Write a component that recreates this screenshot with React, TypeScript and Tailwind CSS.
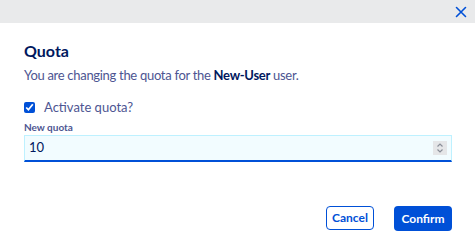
import { useState } from 'react'

export default function App() {
  const [active, setActive] = useState(true)
  const [quota, setQuota] = useState('10')

  return (
    <div className="flex h-[250px] w-[475px] flex-col bg-white font-['Lato',sans-serif] text-[#4d5592]">
      <div className="flex h-[23px] items-center justify-end bg-[#e9eaeb] pr-[8px]">
        <svg width="12" height="12" viewBox="0 0 12 12" className="text-[#0050d7]">
          <path d="M1.5 1.5l9 9M10.5 1.5l-9 9" stroke="currentColor" strokeWidth="1.6" strokeLinecap="round" />
        </svg>
      </div>

      <div className="flex flex-1 flex-col pl-6 pr-[23px]">
        <h2 className="mt-[18px] text-[16px] font-bold leading-[20px] text-[#00185e]">Quota</h2>
        <p className="mt-[5px] text-[13px] leading-[18px] tracking-[-0.3px]">
          You are changing the quota for the <strong className="font-bold text-[#00185e]">New-User</strong> user.
        </p>

        <label className="mt-[14px] flex items-center gap-[9px] text-[13px] leading-[18px]">
          <input
            type="checkbox"
            checked={active}
            onChange={(e) => setActive(e.target.checked)}
            className="h-[11px] w-[11px] accent-[#0050d7]"
          />
          Activate quota?
        </label>

        <div className="mt-[4px] text-[10px] font-bold leading-[14px] text-[#4d5592]">New quota</div>
        <div className="mt-[1px] flex h-[27px] items-center border border-b-2 border-[#bef1ff] border-b-[#0050d7] bg-[#f2fcff] pl-[4px] pr-[4px]">
          <input
            value={quota}
            onChange={(e) => setQuota(e.target.value)}
            className="w-full bg-transparent text-[13px] text-[#00185e] outline-none"
          />
          <div className="flex h-[14px] w-[14px] flex-col items-center justify-center bg-[#e5e6e8]">
            <svg width="8" height="12" viewBox="0 0 8 12" className="text-[#8a8f99]">
              <path d="M1.5 4.5L4 2l2.5 2.5M1.5 7.5L4 10l2.5-2.5" fill="none" stroke="currentColor" strokeWidth="1.2" />
            </svg>
          </div>
        </div>

        <div className="mt-auto mb-[19px] flex justify-end gap-[20px]">
          <button className="h-[24px] w-[48px] rounded-[4px] border border-[#0050d7] text-[12px] font-bold text-[#0050d7]">
            Cancel
          </button>
          <button className="h-[25px] w-[58px] rounded-[4px] bg-[#0050d7] text-[12px] font-bold text-white">
            Confirm
          </button>
        </div>
      </div>
    </div>
  )
}
